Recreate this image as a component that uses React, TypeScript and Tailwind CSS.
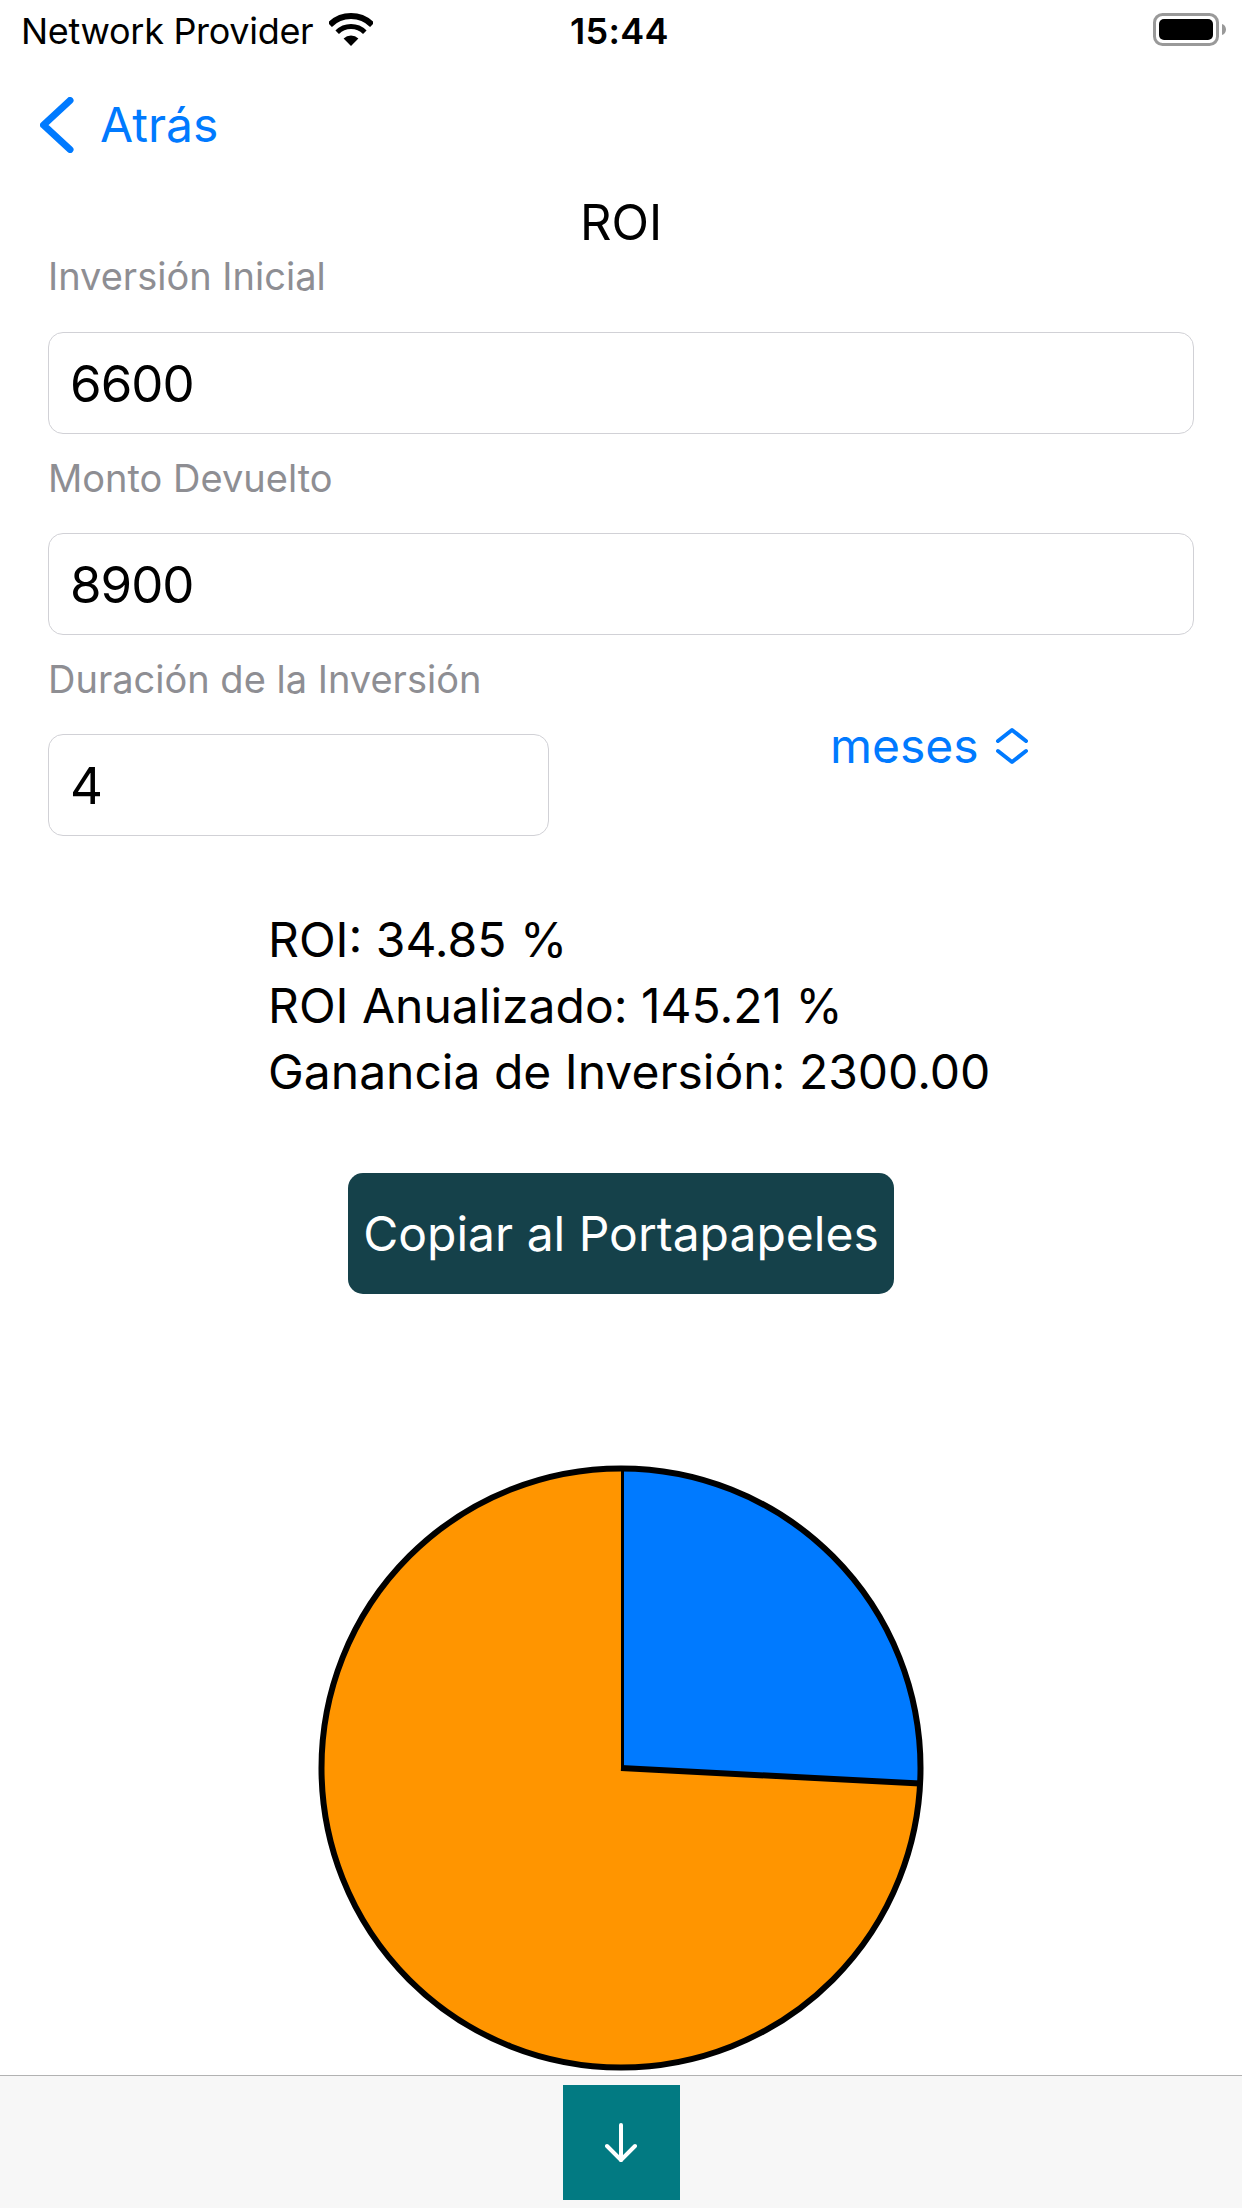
const font = { fontFamily: 'Inter, "Liberation Sans", sans-serif' }

function StatusBar() {
  return (
    <div className="relative flex h-[60px] items-center justify-between pl-[21px] pr-[16px] pt-[2px] text-[36px] text-black">
      <div className="flex items-center gap-[16px]">
        <span className="tracking-[-0.3px]">Network Provider</span>
        <svg className="mb-[3px]" width="44" height="33" viewBox="0 0 44 33" fill="none" stroke="#000">
          <path d="M.8 11.800A30 30 0 0 1 43.200 11.800" strokeWidth="6" />
          <path d="M8.200 19.200A19.500 19.500 0 0 1 35.800 19.200" strokeWidth="5" />
          <path d="M22 33L14.600 25.600A10.500 10.500 0 0 1 29.400 25.600z" fill="#000" stroke="none" />
        </svg>
      </div>
      <span className="absolute left-[570px] top-[4px] text-[36px] font-semibold tracking-[0.3px]">15:44</span>
      <svg className="mb-[3px]" width="73" height="33" viewBox="0 0 73 33" fill="none">
        <rect x="1.500" y="1.500" width="63" height="30" rx="8" stroke="#999" strokeWidth="3" />
        <rect x="6" y="6" width="54" height="21" rx="5" fill="#000" />
        <path d="M69 11c2.500.8 4 3 4 5.500s-1.500 4.700-4 5.500z" fill="#999" />
      </svg>
    </div>
  )
}

function Field({ label, value, wide = true }: { label: string; value: string; wide?: boolean }) {
  return (
    <input
      readOnly
      aria-label={label}
      defaultValue={value}
      className={`block h-[102px] rounded-[15px] border border-[#d1d1d6] bg-white pl-[21px] text-[51px] tracking-[-1px] text-black outline-none ${wide ? 'w-[1146px]' : 'w-[501px]'}`}
    />
  )
}

function Label({ children }: { children: string }) {
  return <p className="h-[41px] text-[38px] leading-[41px] text-[#8e8e93]">{children}</p>
}

export default function App() {
  return (
    <div className="flex h-[2208px] w-[1242px] flex-col overflow-hidden bg-white" style={font}>
      <StatusBar />

      <div className="flex h-[126px] items-center pl-[40px] pt-[4px] text-[#007aff]">
        <svg width="34" height="56" viewBox="0 0 34 56" fill="none" stroke="currentColor" strokeWidth="7" strokeLinecap="round" strokeLinejoin="round">
          <path d="M30 3.500L3.500 28L30 52.500" />
        </svg>
        <span className="ml-[26px] text-[48px]">Atrás</span>
      </div>

      <h1 className="h-[70px] text-center text-[49px] font-normal leading-[74px] text-black">ROI</h1>

      <div className="flex flex-col pl-[48px]">
        <Label>Inversión Inicial</Label>
        <div className="mt-[35px]"><Field label="Inversión Inicial" value="6600" /></div>
        <div className="mt-[24px]"><Label>Monto Devuelto</Label></div>
        <div className="mt-[34px]"><Field label="Monto Devuelto" value="8900" /></div>
        <div className="mt-[24px]"><Label>Duración de la Inversión</Label></div>
        <div className="mt-[34px] flex items-start">
          <Field label="Duración" value="4" wide={false} />
          <button className="ml-[281px] mt-[-24px] flex items-center gap-[16px] text-[48px] text-[#007aff]">
            meses
            <svg width="34" height="38" viewBox="0 0 34 38" fill="none" stroke="currentColor" strokeWidth="4" strokeLinecap="round" strokeLinejoin="round">
              <path d="M3 14L17 3l14 11" />
              <path d="M3 24l14 11 14-11" />
            </svg>
          </button>
        </div>
      </div>

      <div className="mt-[71px] pl-[268px] text-[48px] leading-[66px] text-black">
        <p>ROI: 34.85 %</p>
        <p>ROI Anualizado: 145.21 %</p>
        <p>Ganancia de Inversión: 2300.00</p>
      </div>

      <button className="mx-auto mt-[68px] flex h-[121px] w-[546px] items-center justify-center rounded-[15px] bg-[#15414a] text-[48px] text-white">
        Copiar al Portapapeles
      </button>

      <div className="mt-[168px] flex justify-center">
        <svg width="612" height="612" viewBox="-306 -306 612 612">
          <circle r="299.5" fill="#ff9500" />
          <path d="M0 0V-299.500A299.500 299.500 0 0 1 299.100 15.500z" fill="#007aff" />
          <path d="M1.500 -299.500V0" stroke="#000" strokeWidth="3" fill="none" />
          <path d="M0 0L299.100 15.500" stroke="#000" strokeWidth="6" fill="none" />
          <circle r="299.5" stroke="#000" strokeWidth="6" fill="none" />
        </svg>
      </div>

      <div className="mt-auto flex h-[133px] justify-center border-t-[1.5px] border-[#b2b2b2] bg-[#f7f7f7] pt-[9px]">
        <button className="flex h-[115px] w-[117px] items-center justify-center bg-[#027a82] text-white">
          <svg width="32" height="40" viewBox="0 0 32 40" fill="none" stroke="currentColor" strokeWidth="4" strokeLinecap="round" strokeLinejoin="round">
            <path d="M16 2V37" />
            <path d="M2 23l14 14 14-14" />
          </svg>
        </button>
      </div>
    </div>
  )
}
